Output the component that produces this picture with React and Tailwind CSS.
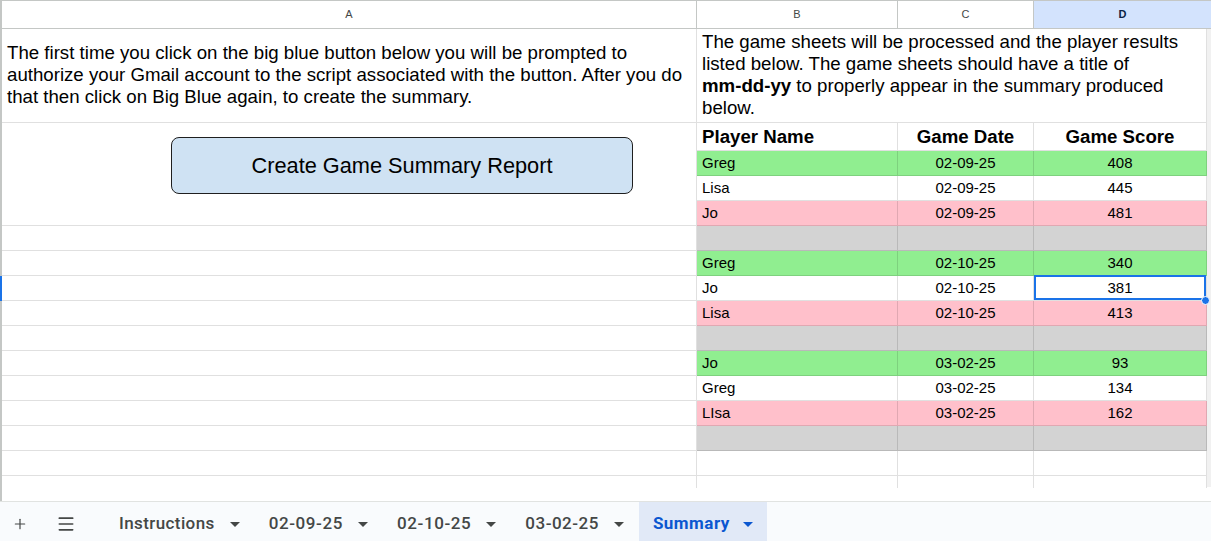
import { Plus, Menu } from 'lucide-react'

const rows = [
  { name: 'Greg', date: '02-09-25', score: '408', tone: 'green' },
  { name: 'Lisa', date: '02-09-25', score: '445', tone: 'white' },
  { name: 'Jo', date: '02-09-25', score: '481', tone: 'pink' },
  { tone: 'gray' },
  { name: 'Greg', date: '02-10-25', score: '340', tone: 'green' },
  { name: 'Jo', date: '02-10-25', score: '381', tone: 'white', selected: true },
  { name: 'Lisa', date: '02-10-25', score: '413', tone: 'pink' },
  { tone: 'gray' },
  { name: 'Jo', date: '03-02-25', score: '93', tone: 'green' },
  { name: 'Greg', date: '03-02-25', score: '134', tone: 'white' },
  { name: 'LIsa', date: '03-02-25', score: '162', tone: 'pink' },
  { tone: 'gray' },
  { tone: 'white' },
]

const toneBg = {
  green: 'bg-[#90ee90]',
  pink: 'bg-[#ffc0cb]',
  gray: 'bg-[#d3d3d3]',
  white: 'bg-white',
}

const tabs = [
  ['Instructions', 'tracking-[0.4px]'],
  ['02-09-25', 'tracking-[0.6px]'],
  ['02-10-25', 'tracking-[0.6px]'],
  ['03-02-25', 'tracking-[0.5px]'],
]

const Cell = ({ className = '', children }) => (
  <div className={`border-r border-b border-black/[0.12] ${className}`}>{children}</div>
)

const Caret = ({ className = '' }) => (
  <svg width="10" height="5" viewBox="0 0 10 5" className={className}>
    <path d="M0 0h10L5 5z" fill="currentColor" />
  </svg>
)

const App = () => {
  return (
    <div
      className="w-[1211px] h-[541px] flex flex-col bg-white overflow-hidden text-black"
      style={{ fontFamily: '"Liberation Sans", Arial, sans-serif' }}
    >
      {/* Column headers */}
      <div className="flex h-[29px] border-t border-[#c4c7c5]">
        <div className="w-[2px] bg-[#c4c7c5]" />
        {[
          ['A', 'w-[695px]'],
          ['B', 'w-[201px]'],
          ['C', 'w-[136px]'],
        ].map(([l, w]) => (
          <div
            key={l}
            className={`${w} flex items-center justify-center border-r border-b border-[#c4c7c5] text-[11px] text-[#444746]`}
          >
            {l}
          </div>
        ))}
        <div className="flex-1 flex items-center justify-center border-b border-[#c4c7c5] bg-[#d3e3fd] text-[11px] font-bold text-[#0b1f44]">
          D
        </div>
      </div>

      {/* Grid body */}
      <div className="flex h-[472px]">
        <div className="flex flex-col">
          <div className="grid grid-cols-[2px_695px_201px_136px_173px] grid-rows-[94px_28px_repeat(13,25px)_12px]">
            {/* Row 1 */}
            <div className="bg-[#c4c7c5]" />
            <Cell className="flex items-center px-[5px] pb-[1px] text-[18.67px] leading-[22px]">
              <p>
                The first time you click on the big blue button below you will be prompted to
                <br />
                authorize your Gmail account to the script associated with the button. After you do
                <br />
                that then click on Big Blue again, to create the summary.
              </p>
            </Cell>
            <Cell className="col-span-3 flex items-center px-[5px] pb-[1px] text-[18.67px] leading-[22px]">
              <p>
                The game sheets will be processed and the player results
                <br />
                listed below. The game sheets should have a title of
                <br />
                <b>mm-dd-yy</b> to properly appear in the summary produced
                <br />
                below.
              </p>
            </Cell>

            {/* Row 2: table headers + merged button cell */}
            <div className="bg-[#c4c7c5]" />
            <Cell className="row-span-4 pl-[169px] pt-[14px]">
              <button className="w-[462px] h-[57px] rounded-[8px] border border-[#1f1f1f] bg-[#cfe2f3] pt-[2px] text-[21.75px] text-black">
                Create Game Summary Report
              </button>
            </Cell>
            <Cell className="flex items-center px-[5px] pt-[1px] text-[18.67px] font-bold">Player Name</Cell>
            <Cell className="flex items-center justify-center pt-[1px] text-[18.67px] font-bold">Game Date</Cell>
            <Cell className="flex items-center justify-center pt-[1px] text-[18.67px] font-bold">Game Score</Cell>

            {rows.map((r, i) => (
              <div key={i} className="contents">
                <div className={r.selected ? 'bg-[#1a73e8]' : 'bg-[#c4c7c5]'} />
                {i >= 3 && <Cell className="bg-white" />}
                <Cell className={`${toneBg[r.tone]} flex items-center px-[5px] pt-[1px] text-[15px]`}>{r.name}</Cell>
                <Cell className={`${toneBg[r.tone]} flex items-center justify-center pt-[1px] text-[15px]`}>{r.date}</Cell>
                <Cell className={`${toneBg[r.tone]} relative flex items-center justify-center pt-[1px] text-[15px]`}>
                  {r.score}
                  {r.selected && (
                    <>
                      <div className="absolute left-0 top-[-1px] right-0 bottom-0 border-2 border-[#1a73e8] z-10" />
                      <div className="absolute right-[-4px] bottom-[-5px] w-[9px] h-[9px] rounded-full bg-[#1a73e8] border border-white z-20" />
                    </>
                  )}
                </Cell>
              </div>
            ))}

            {/* partial last row */}
            <div className="bg-[#c4c7c5]" />
            <div className="border-r border-black/[0.12]" />
            <div className="border-r border-black/[0.12]" />
            <div className="border-r border-black/[0.12]" />
            <div className="border-r border-black/[0.12]" />
          </div>
          <div className="flex-1 w-[2px] bg-[#c4c7c5]" />
        </div>
        <div className="w-[4px] h-[458px] bg-[#f1f1f1]" />
      </div>

      {/* Sheet tabs */}
      <div
        className="flex-1 flex items-stretch border-t border-[#e1e3e1] bg-[#f9fbfd] text-[#444746] pt-[5px]"
        style={{ fontFamily: 'Roboto, "Noto Sans", sans-serif' }}
      >
        <div className="w-[40px] flex items-center justify-center">
          <Plus className="w-[16px] h-[16px]" strokeWidth={1.8} />
        </div>
        <div className="w-[52px] flex items-center justify-center">
          <Menu className="w-[20px] h-[20px]" strokeWidth={2} />
        </div>
        <div className="w-[13px]" />
        {tabs.map(([t, track]) => (
          <div key={t} className={`flex items-center pl-[14px] pr-[15px] gap-[15px] text-[17px] font-medium ${track} -mt-[5px] pt-[5px]`}>
            <span>{t}</span>
            <Caret />
          </div>
        ))}
        <div className="flex items-center pl-[14px] pr-[14px] gap-[13px] -mt-[5px] pt-[5px] bg-[#e1e9f7] text-[17px] font-bold tracking-[0.5px] text-[#0b57d0]">
          <span>Summary</span>
          <Caret />
        </div>
      </div>
    </div>
  )
}

export default App
